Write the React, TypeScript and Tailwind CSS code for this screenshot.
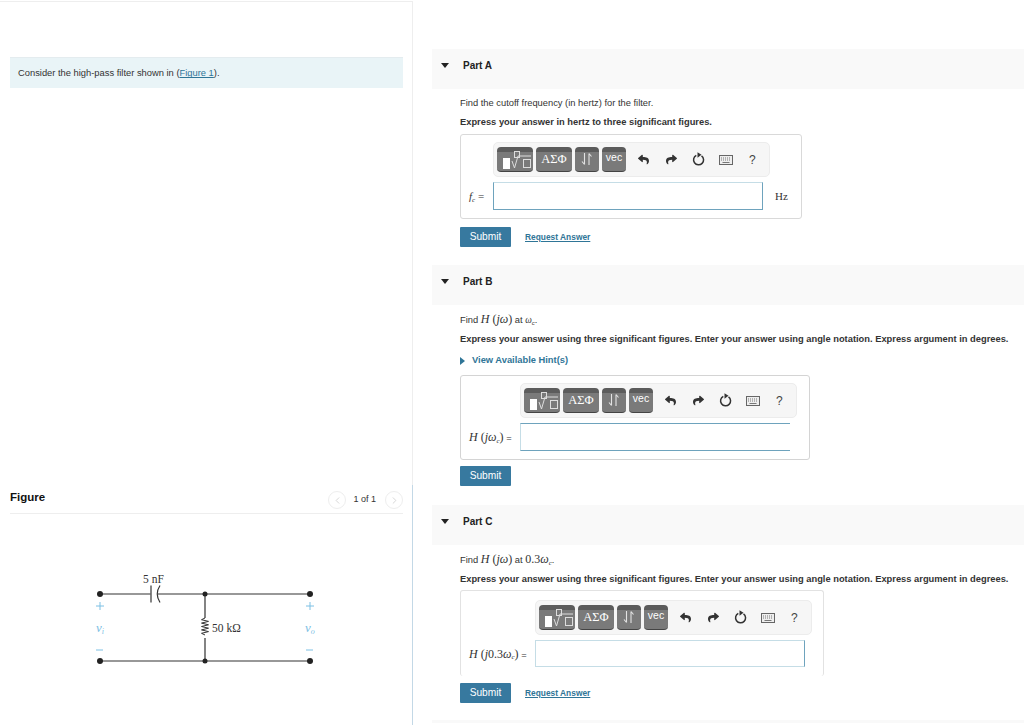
import { FaReply, FaShare } from "react-icons/fa";
import { ChevronLeft, ChevronRight } from "lucide-react";
import type { ReactNode } from "react";

function Var({ children }: { children: ReactNode }) {
  return <span className="font-['Liberation_Serif',serif] italic">{children}</span>;
}

function Fn({ arg, sub }: { arg: ReactNode; sub?: boolean }) {
  return (
    <span className="font-['Liberation_Serif',serif] text-[12px]">
      <i>H</i> (<i>j</i>
      {arg}
      {sub ? <sub className="text-[7px] italic">c</sub> : null})
    </span>
  );
}

function ToolButton({ className, children }: { className: string; children: ReactNode }) {
  return (
    <div
      className={`flex h-[25px] items-center justify-center rounded-[4px] border-b border-[#444] bg-gradient-to-b from-[#5c5c5c] from-[22%] to-[#7a7a7a] to-[22%] text-white ${className}`}
    >
      {children}
    </div>
  );
}

function Toolbar({ marginLeft }: { marginLeft: string }) {
  return (
    <div className={`flex h-[35px] w-[277px] items-center rounded-[5px] border border-[#ececec] bg-[#f6f6f6] pl-[3px] ${marginLeft}`}>
      <ToolButton className="mr-[3px] w-[36px]">
        <svg width="36" height="24" viewBox="0 0 36 24">
          <rect x="6" y="11" width="7" height="11" fill="#fff" />
          <rect x="17.500" y="4.500" width="5" height="6" fill="none" stroke="#ddd" strokeWidth="1" />
          <path d="M15 14l2.500 7 3.500-12h13" fill="none" stroke="#ddd" strokeWidth="1" />
          <rect x="26.500" y="12.500" width="7" height="8" fill="none" stroke="#ddd" strokeWidth="1" />
        </svg>
      </ToolButton>
      <ToolButton className="mr-[3px] w-[36px] font-['Liberation_Serif',serif] text-[12.500px] text-[#eee]">ΑΣΦ</ToolButton>
      <ToolButton className="mr-[3px] w-[24px]">
        <svg width="12" height="14" viewBox="0 0 12 14" fill="none" stroke="#e2e2e2" strokeWidth="1.100">
          <path d="M3.500 1v11.500M3.500 12.500L1 9.500" />
          <path d="M8 13V1.500M8 1.500l2.500 3" />
        </svg>
      </ToolButton>
      <ToolButton className="w-[24px] pb-[3px] text-[10.500px] text-[#eee]">vec</ToolButton>
      <FaReply className="ml-[12px] h-[11px] w-[11px] text-[#333]" />
      <FaShare className="ml-[17px] h-[11px] w-[11px] text-[#333]" />
      <svg className="ml-[15px]" width="14" height="15" viewBox="0 0 14 15" fill="none">
        <path d="M9.500 3.800A5 5 0 1 1 4.300 3.400" stroke="#333" strokeWidth="1.500" />
        <path d="M5.500 0.300L9.500 2.800 5.500 5.700Z" fill="#333" />
      </svg>
      <svg className="ml-[13px]" width="14" height="10" viewBox="0 0 14 10">
        <rect x="0.500" y="0.500" width="13" height="9" fill="#eeeeee" stroke="#666" />
        <path d="M2 3h10M2 5h10" stroke="#777" strokeDasharray="1 1" />
        <path d="M3.500 7.500h7" stroke="#777" />
      </svg>
      <span className="ml-[16px] font-['Liberation_Sans',sans-serif] text-[12px] text-[#444]">?</span>
    </div>
  );
}

function SubmitRow({ request }: { request?: boolean }) {
  return (
    <div className="flex items-center">
      <button className="h-[20px] w-[51px] rounded-[1px] bg-[#37799f] text-[10.200px] text-white">Submit</button>
      {request ? (
        <a className="ml-[14px] text-[8.400px] font-bold text-[#2f7597] underline">Request Answer</a>
      ) : null}
    </div>
  );
}

function PartHeader({ name }: { name: string }) {
  return (
    <div className="flex h-[40px] bg-[#f9f9f9] pt-[11px]">
      <div className="ml-[9px] mt-[3px] h-0 w-0 border-x-[4px] border-t-[5px] border-x-transparent border-t-[#222]" />
      <span className="ml-[14px] text-[10px] font-bold leading-[11px] text-[#222]">{name}</span>
    </div>
  );
}

function Circuit() {
  return (
    <svg className="block" width="402" height="110" viewBox="0 0 402 110">
      {/* origin of this drawing is x=10, y=565 on the page */}
      <g stroke="#333" strokeWidth="1.200" fill="none">
        <path d="M90 29H140.500M148 29H300M90 96H300M195 29V53M195 73V96" />
        <path d="M141 20.500V37.500" />
        <path d="M150 20.500Q144.500 29 150 37.500" />
        <path d="M195 53l-3.500 1.700 7 1.700-7 1.700 7 1.700-7 1.700 7 1.700-7 1.700 7 1.700-7 1.700 3.500 1.700" strokeWidth="1" />
      </g>
      <g fill="#222">
        <circle cx="90" cy="29" r="3" />
        <circle cx="195" cy="29" r="2.500" />
        <circle cx="300" cy="29" r="3" />
        <circle cx="90" cy="96" r="3" />
        <circle cx="195" cy="96" r="2.500" />
        <circle cx="300" cy="96" r="3" />
      </g>
      <g fontFamily="'Liberation Serif', serif" fontSize="11.500" fill="#333">
        <text x="133" y="18">5 nF</text>
        <text x="202" y="67">50 kΩ</text>
      </g>
      <g stroke="#7cc0e4" strokeWidth="1" fill="none">
        <path d="M86 41h8M90 37v8M86 85h7" />
        <path d="M296 41h8M300 37v8M296 85h7" />
      </g>
      <g fontFamily="'Liberation Serif', serif" fontStyle="italic" fontSize="13" fill="#7cc0e4">
        <text x="86" y="67">v<tspan fontSize="8" dy="2">i</tspan></text>
        <text x="295" y="67">v<tspan fontSize="8" dy="2">o</tspan></text>
      </g>
    </svg>
  );
}

export default function App() {
  return (
    <div className="flex h-[725px] w-[1024px] overflow-hidden bg-white font-['Liberation_Sans',sans-serif] text-[#333]">
      <div className="flex w-[413px] shrink-0 flex-col">
        <div className="mt-[1px] h-[484px] border-r border-t border-[#eeeeee] pl-[10px] pr-[9px] pt-[55px]">
          <div className="flex h-[31px] items-center border-t border-[#e4ecef] bg-[#e9f4f7] pl-[8px] pt-[1px] text-[9.360px]">
            <span>
              Consider the high-pass filter shown in (<a className="text-[#2f7597] underline">Figure 1</a>).
            </span>
          </div>
        </div>
        <div className="flex-1 border-r border-[#c3d8e6] pl-[10px] pr-[9px]">
          <div className="flex h-[29px] items-start justify-between border-b border-[#eeeeee] pt-[5px]">
            <span className="text-[11.500px] font-bold leading-[14px] text-[#111]">Figure</span>
            <div className="mt-[1px] flex items-center text-[9px] text-[#333]">
              <span className="flex h-[18px] w-[18px] items-center justify-center rounded-full border border-[#eeeeee]">
                <ChevronLeft className="h-[11px] w-[11px] text-[#c4c4c4]" strokeWidth={1.500} />
              </span>
              <span className="ml-[7px] mr-[9px]">1 of 1</span>
              <span className="flex h-[18px] w-[18px] items-center justify-center rounded-full border border-[#eeeeee]">
                <ChevronRight className="h-[11px] w-[11px] text-[#c4c4c4]" strokeWidth={1.500} />
              </span>
            </div>
          </div>
          <div className="mt-[51px]">
            <Circuit />
          </div>
        </div>
      </div>

      <div className="flex-1 pl-[19px] pt-[49px] text-[9.330px]">
        <section className="h-[216px]">
          <PartHeader name="Part A" />
          <div className="pl-[28px]">
            <p className="mt-[9px] h-[11px] leading-[11px]">Find the cutoff frequency (in hertz) for the filter.</p>
            <p className="mt-[8px] h-[11px] font-bold leading-[11px]">Express your answer in hertz to three significant figures.</p>
            <div className="mt-[6px] h-[85px] w-[342px] rounded-[3px] border border-[#d9d9d9] pt-[7px]">
              <Toolbar marginLeft="ml-[32px]" />
              <div className="mt-[5px] flex items-center">
                <span className="ml-[8px] w-[24px] font-['Liberation_Serif',serif] text-[11px]">
                  <Var>f</Var>
                  <sub className="text-[7px] italic">c</sub> =
                </span>
                <div className="h-[28px] w-[270px] border border-[#c5dde6] border-b-[#6ea3bd] border-l-[#6ea3bd] border-r-[#6ea3bd]" />
                <span className="ml-[12px] font-['Liberation_Serif',serif] text-[11px]">Hz</span>
              </div>
            </div>
            <div className="mt-[8px]">
              <SubmitRow request />
            </div>
          </div>
        </section>

        <section className="h-[240px]">
          <PartHeader name="Part B" />
          <div className="pl-[28px]">
            <p className="mt-[8px] h-[12px] leading-[12px]">
              Find <Fn arg={<i>ω</i>} /> at <Var>ω</Var>
              <sub className="text-[6px] italic">c</sub>.
            </p>
            <p className="mt-[9px] h-[11px] font-bold leading-[11px]">
              Express your answer using three significant figures. Enter your answer using angle notation. Express argument in degrees.
            </p>
            <p className="mt-[10px] flex h-[11px] items-center font-bold leading-[11px] text-[#2f7597]">
              <span className="mr-[7px] h-0 w-0 border-y-[4px] border-l-[5px] border-y-transparent border-l-[#2f7597]" />
              View Available Hint(s)
            </p>
            <div className="mt-[9px] h-[85px] w-[350px] rounded-[3px] border border-[#d4d4d4] pt-[7px]">
              <Toolbar marginLeft="ml-[59px]" />
              <div className="mt-[5px] flex items-center">
                <span className="ml-[8px] w-[51px]">
                  <Fn arg={<i>ω</i>} sub /> =
                </span>
                <div className="h-[28px] w-[270px] border-y border-l border-y-[#6ea3bd] border-l-[#c5dde6]" />
              </div>
            </div>
            <div className="mt-[6px]">
              <SubmitRow />
            </div>
          </div>
        </section>

        <section className="relative h-[220px]">
          <PartHeader name="Part C" />
          <div className="pl-[28px]">
            <p className="mt-[8px] h-[12px] leading-[12px]">
              Find <Fn arg={<i>ω</i>} /> at <span className="font-['Liberation_Serif',serif] text-[12px]">0.3<i>ω</i><sub className="text-[7px] italic">c</sub></span>.
            </p>
            <p className="mt-[9px] h-[11px] font-bold leading-[11px]">
              Express your answer using three significant figures. Enter your answer using angle notation. Express argument in degrees.
            </p>
            <div className="mt-[5px] h-[86px] w-[364px] rounded-[3px] border-x border-t border-[#e2e2e2] pt-[9px]">
              <Toolbar marginLeft="ml-[74px]" />
              <div className="mt-[5px] flex items-center">
                <span className="ml-[8px] w-[66px]">
                  <Fn arg={<span>0.3<i>ω</i></span>} sub /> =
                </span>
                <div className="h-[27px] w-[270px] border border-[#c5dde6] border-r-[#6ea3bd]" />
              </div>
            </div>
            <div className="mt-[7px]">
              <SubmitRow request />
            </div>
          </div>
          <div className="mt-[17px] h-[3px] bg-[#f9f9f9]" />
        </section>
      </div>
    </div>
  );
}
